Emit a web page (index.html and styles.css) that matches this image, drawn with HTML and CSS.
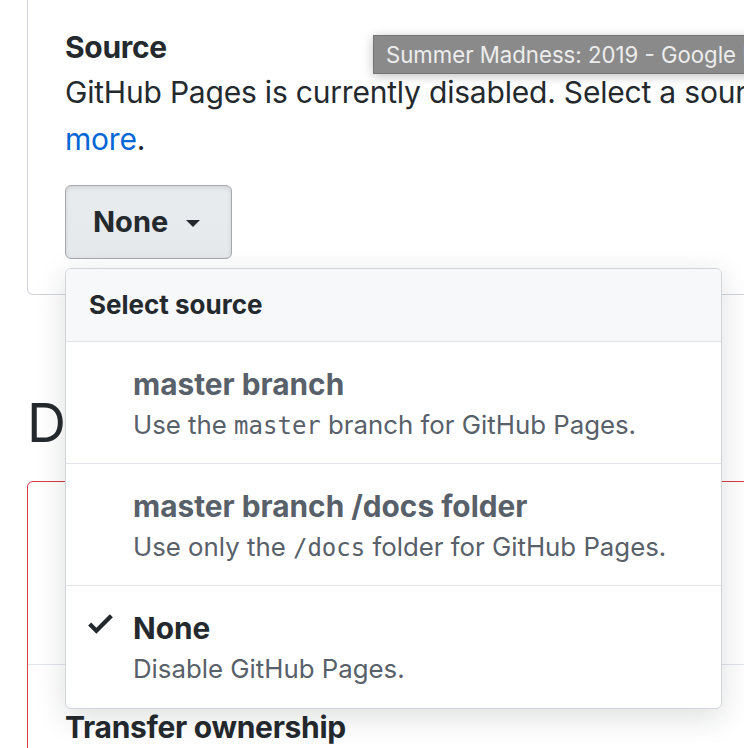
FILE: index.html
```html
<!DOCTYPE html>
<html lang="en">
<head>
<meta charset="utf-8">
<title>GitHub Pages settings</title>
<link rel="stylesheet" href="styles.css">
</head>
<body>
<div class="page">
  <section class="box">
    <h4 class="box-title">Source</h4>
    <p class="box-text"><span class="line">GitHub Pages is currently disabled. Select a source below to enable GitHub Pages for this repository. <a href="#" class="link">Learn</a></span> <a href="#" class="link">more</a>.</p>
    <div class="picker">
      <button class="btn" type="button">None <span class="caret"></span></button>
      <div class="menu">
        <div class="menu-header">Select source</div>
        <div class="menu-item">
          <div class="item-title">master branch</div>
          <div class="item-desc">Use the <code>master</code> branch for GitHub Pages.</div>
        </div>
        <div class="menu-item">
          <div class="item-title">master branch /docs folder</div>
          <div class="item-desc">Use only the <code>/docs</code> folder for GitHub Pages.</div>
        </div>
        <div class="menu-item selected">
          <svg class="check" viewBox="0 0 12 16" width="25" height="33" aria-hidden="true"><path d="M12 5l-8 8-4-4 1.5-1.5L4 10l6.5-6.5L12 5z"/></svg>
          <div class="item-title">None</div>
          <div class="item-desc">Disable GitHub Pages.</div>
        </div>
      </div>
    </div>
  </section>

  <h2 class="danger-title">Danger Zone</h2>
  <section class="danger-box">
    <div class="danger-row first">
      <h4 class="box-title">Make this repository private</h4>
    </div>
    <div class="danger-row last">
      <h4 class="box-title">Transfer ownership</h4>
    </div>
  </section>

  <div class="tooltip">Summer Madness: 2019 - Google Drive</div>
</div>
</body>
</html>
```

FILE: styles.css
```css
html, body {
  margin: 0;
  padding: 0;
  background: #fff;
  overflow: hidden;
}
body {
  font-family: Inter, "Noto Sans", "Liberation Sans", sans-serif;
  color: #24292e;
  width: 744px;
  height: 748px;
}
.page {
  position: relative;
  width: 744px;
  height: 748px;
  overflow: hidden;
  padding-left: 27px;
  box-sizing: border-box;
}
.box {
  width: 800px;
  border: 1px solid #d1d5da;
  border-top: none;
  border-radius: 0 0 6px 6px;
  padding: 27px 0 35px 37px;
  box-sizing: border-box;
}
.box-title {
  margin: 0;
  font-size: 30px;
  letter-spacing: -0.3px;
  line-height: 40px;
  font-weight: 700;
  white-space: nowrap;
}
.box-text {
  margin: 2px 0 0;
  width: 720px;
  font-size: 30px;
  letter-spacing: -0.2px;
  line-height: 46.5px;
}
.line {
  white-space: nowrap;
}
.link {
  color: #0366d6;
  text-decoration: none;
}
.picker {
  position: relative;
  margin-top: 23px;
  height: 74px;
}
.btn {
  display: flex;
  align-items: center;
  gap: 18px;
  height: 74px;
  padding: 0 31px 0 27px;
  border: 1px solid #a5a9ae;
  border-radius: 6px;
  background: linear-gradient(#e9ecef, #e6e9ec);
  box-shadow: inset 0 2px 4px rgba(27, 31, 35, 0.12);
  font-family: inherit;
  font-size: 29px;
  font-weight: 700;
  color: #24292e;
  line-height: 72px;
}
.caret {
  width: 0;
  height: 0;
  border-left: 7.5px solid transparent;
  border-right: 7.5px solid transparent;
  border-top: 7.5px solid #24292e;
  margin-top: 2px;
}
.menu {
  position: absolute;
  left: 0;
  top: 83px;
  width: 657px;
  background: #fff;
  border: 1px solid #d1d5da;
  border-radius: 6px;
  box-shadow: 0 8px 30px rgba(27, 31, 35, 0.15);
  overflow: hidden;
  z-index: 5;
  box-sizing: border-box;
}
.menu-header {
  height: 72px;
  line-height: 72px;
  padding-left: 23px;
  background: #f6f8fa;
  border-bottom: 1px solid #e1e4e8;
  font-size: 26px;
  font-weight: 700;
}
.menu-item {
  position: relative;
  height: 122px;
  padding: 24px 0 0 67px;
  box-sizing: border-box;
  border-bottom: 1px solid #e1e4e8;
  color: #586069;
}
.menu-item:last-child {
  border-bottom: none;
}
.item-title {
  font-size: 29.8px;
  line-height: 36px;
  font-weight: 700;
}
.item-desc {
  font-size: 25.8px;
  line-height: 45px;
}
.item-desc code {
  font-family: "DejaVu Sans Mono", "Liberation Mono", monospace;
  font-size: 24px;
}
.selected .item-title {
  color: #24292e;
}
.check {
  position: absolute;
  left: 22px;
  top: 21px;
  fill: #24292e;
}
.danger-title {
  margin: 94px 0 0;
  font-size: 54px;
  line-height: 67.5px;
  font-weight: 400;
  white-space: nowrap;
}
.danger-box {
  margin-top: 24px;
  width: 800px;
  border: 1px solid #d73a49;
  border-radius: 6px;
}
.danger-row {
  padding: 39px 0 0 37px;
}
.danger-row.first {
  height: 183px;
  box-sizing: border-box;
  border-bottom: 1px solid #e1e4e8;
}
.danger-row.last {
  padding-top: 42px;
  height: 160px;
  box-sizing: border-box;
}
.tooltip {
  position: absolute;
  left: 373px;
  top: 35px;
  height: 39px;
  line-height: 37px;
  padding: 0 12px;
  box-sizing: border-box;
  background: #8a8a8a;
  border: 1px solid #747474;
  color: #ededed;
  font-size: 22.2px;
  white-space: nowrap;
  box-shadow: 0 2px 10px rgba(0, 0, 0, 0.25);
  z-index: 10;
}
```
